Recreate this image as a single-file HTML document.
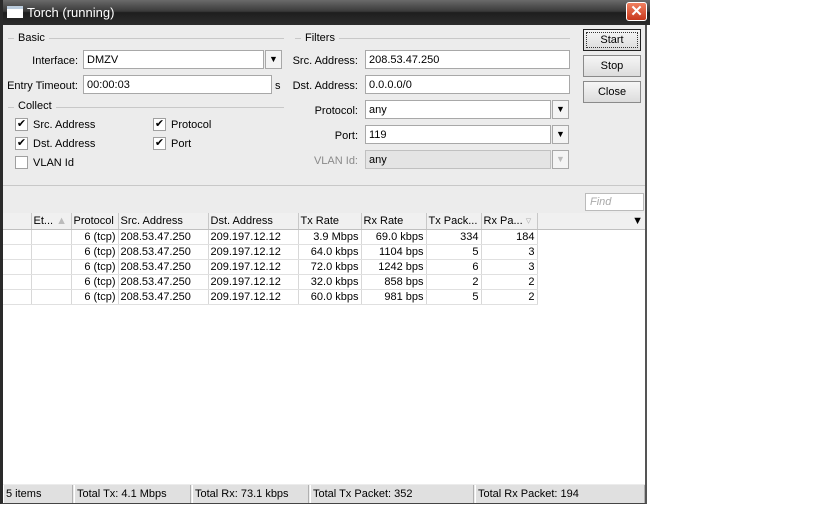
<!DOCTYPE html>
<html><head><style>
*{box-sizing:border-box;margin:0;padding:0}
body{width:840px;height:525px;background:#fff;position:relative;overflow:hidden;font-family:"Liberation Sans",sans-serif;font-size:11px;color:#000}
.a{position:absolute;white-space:nowrap}
#win{position:absolute;left:0;top:0;width:647px;height:504px;background:#ececec;border-left:3px solid #2a2a2a;border-right:2px solid #555;border-bottom:1px solid #444}
#title{position:absolute;left:0;top:0;width:647px;height:25px;background:linear-gradient(#6a6a6a,#3a3a3a 45%,#1e1e1e 50%,#2c2c2c);color:#fff;font-size:13px}
.inp{position:absolute;background:#fff;border:1px solid #a8a8a8;height:19px;padding:3px 3px;white-space:nowrap}
.dis{background:#e4e4e4;border-color:#c0c0c0}
.dd{position:absolute;width:17px;height:19px;border:1px solid #a8a8a8;background:#f4f4f4;font-size:9px;text-align:center;line-height:17px}
.lbl{position:absolute;text-align:right;white-space:nowrap}
.grp{position:absolute;height:1px;background:#c8c8c8}
.cb{position:absolute;width:13px;height:13px;border:1px solid #a0a0a0;background:#fff;font-size:11px;line-height:11px;text-align:center}
.btn{position:absolute;left:583px;width:58px;height:22px;border:1px solid #8a8a8a;background:linear-gradient(#f6f6f6,#dcdcdc);text-align:center;line-height:21px}
table{position:absolute;left:3px;top:213px;border-collapse:collapse;background:#fff}
td{height:15px;padding:0 2px;border-right:1px solid #d8d8d8;border-bottom:1px solid #e0e0e0;white-space:nowrap;overflow:hidden;line-height:14px}
tr.h td{height:16px;padding-top:1px;background:#f0f0f0;border-right:1px solid #c8c8c8;border-bottom:1px solid #c0c0c0}
.r{text-align:right}
.st{position:absolute;top:485px;height:18px;background:#e0e0e0;border-left:1px solid #fff;border-right:1px solid #b0b0b0;padding:3px 2px;white-space:nowrap}
</style></head><body>
<div id="win">
<div id="title"><div class="a" style="left:4px;top:6px;width:16px;height:12px;background:#fff;border-top:3px solid #bcd"></div><div class="a" style="left:24px;top:5px">Torch (running)</div>
<div class="a" style="left:623px;top:2px;width:21px;height:19px;border:1px solid #fff;border-radius:3px;background:linear-gradient(#f08060,#c8381c);color:#fff;text-align:center;font-weight:bold;font-size:15px;line-height:17px">✕</div></div>
</div>
<div class="grp" style="left:8px;top:38px;width:276px"></div><div class="a" style="left:14px;top:32px;background:#ececec;padding:0 4px">Basic</div>
<div class="lbl" style="left:10px;width:68px;top:55px">Interface:</div><div class="inp" style="left:83px;top:50px;width:181px">DMZV</div><div class="dd" style="left:265px;top:50px">▼</div>
<div class="lbl" style="left:4px;width:74px;top:80px">Entry Timeout:</div><div class="inp" style="left:83px;top:75px;width:189px">00:00:03</div><div class="a" style="left:275px;top:80px">s</div>
<div class="grp" style="left:8px;top:107px;width:276px"></div><div class="a" style="left:14px;top:100px;background:#ececec;padding:0 4px">Collect</div>
<div class="cb" style="left:15px;top:118px">✔</div><div class="a" style="left:33px;top:119px">Src. Address</div>
<div class="cb" style="left:15px;top:137px">✔</div><div class="a" style="left:33px;top:138px">Dst. Address</div>
<div class="cb" style="left:15px;top:156px"></div><div class="a" style="left:33px;top:157px">VLAN Id</div>
<div class="cb" style="left:153px;top:118px">✔</div><div class="a" style="left:171px;top:119px">Protocol</div>
<div class="cb" style="left:153px;top:137px">✔</div><div class="a" style="left:171px;top:138px">Port</div>
<div class="grp" style="left:295px;top:38px;width:275px"></div><div class="a" style="left:301px;top:32px;background:#ececec;padding:0 4px">Filters</div>
<div class="lbl" style="left:290px;width:68px;top:55px">Src. Address:</div><div class="inp" style="left:365px;top:50px;width:205px">208.53.47.250</div>
<div class="lbl" style="left:290px;width:68px;top:80px">Dst. Address:</div><div class="inp" style="left:365px;top:75px;width:205px">0.0.0.0/0</div>
<div class="lbl" style="left:290px;width:68px;top:105px">Protocol:</div><div class="inp" style="left:365px;top:100px;width:186px">any</div><div class="dd" style="left:552px;top:100px">▼</div>
<div class="lbl" style="left:290px;width:68px;top:130px">Port:</div><div class="inp" style="left:365px;top:125px;width:186px">119</div><div class="dd" style="left:552px;top:125px">▼</div>
<div class="lbl" style="left:290px;width:68px;top:155px;color:#8a8a8a">VLAN Id:</div><div class="inp dis" style="left:365px;top:150px;width:186px">any</div><div class="dd dis" style="left:552px;top:150px;color:#bbb">▼</div>
<div class="btn" style="left:583px;top:29px;border:1px solid #222;outline:1px dotted #333;outline-offset:-4px">Start</div>
<div class="btn" style="top:55px">Stop</div>
<div class="btn" style="top:81px">Close</div>
<div class="a" style="left:3px;top:185px;width:642px;height:1px;background:#c8c8c8"></div>
<div class="inp" style="left:585px;top:193px;width:59px;height:18px;padding:2px 4px;color:#aaa;font-style:italic;border-color:#bbb">Find</div>
<div class="a" style="left:3px;top:213px;width:642px;height:271px;background:#fff"></div>
<table>
<tr class="h"><td style="width:28px"></td><td style="width:40px">Et... <span style="color:#bbb">▲</span></td><td style="width:47px">Protocol</td><td style="width:90px">Src. Address</td><td style="width:90px">Dst. Address</td><td style="width:63px">Tx Rate</td><td style="width:65px">Rx Rate</td><td style="width:55px">Tx Pack...</td><td style="width:56px">Rx Pa... <span style="color:#bbb">▿</span></td><td style="width:108px;border-right:none" class="r">▼</td></tr>
<tr><td></td><td></td><td class="r">6 (tcp)</td><td>208.53.47.250</td><td>209.197.12.12</td><td class="r">3.9 Mbps</td><td class="r">69.0 kbps</td><td class="r">334</td><td class="r">184</td><td style="border:none"></td></tr>
<tr><td></td><td></td><td class="r">6 (tcp)</td><td>208.53.47.250</td><td>209.197.12.12</td><td class="r">64.0 kbps</td><td class="r">1104 bps</td><td class="r">5</td><td class="r">3</td><td style="border:none"></td></tr>
<tr><td></td><td></td><td class="r">6 (tcp)</td><td>208.53.47.250</td><td>209.197.12.12</td><td class="r">72.0 kbps</td><td class="r">1242 bps</td><td class="r">6</td><td class="r">3</td><td style="border:none"></td></tr>
<tr><td></td><td></td><td class="r">6 (tcp)</td><td>208.53.47.250</td><td>209.197.12.12</td><td class="r">32.0 kbps</td><td class="r">858 bps</td><td class="r">2</td><td class="r">2</td><td style="border:none"></td></tr>
<tr><td></td><td></td><td class="r">6 (tcp)</td><td>208.53.47.250</td><td>209.197.12.12</td><td class="r">60.0 kbps</td><td class="r">981 bps</td><td class="r">5</td><td class="r">2</td><td style="border:none"></td></tr>
</table>
<div class="st" style="left:3px;width:70px">5 items</div>
<div class="st" style="left:74px;width:117px">Total Tx: 4.1 Mbps</div>
<div class="st" style="left:192px;width:117px">Total Rx: 73.1 kbps</div>
<div class="st" style="left:310px;width:164px">Total Tx Packet: 352</div>
<div class="st" style="left:475px;width:170px">Total Rx Packet: 194</div>
</body></html>
